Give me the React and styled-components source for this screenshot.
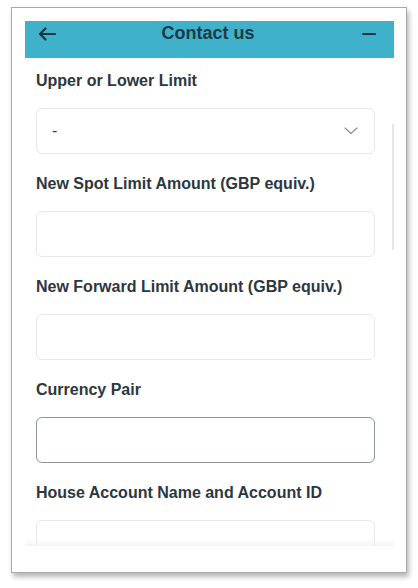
import styled, { createGlobalStyle } from "styled-components";

const GlobalStyle = createGlobalStyle`
  html, body {
    margin: 0;
    padding: 0;
    background: #ffffff;
    font-family: "Liberation Sans", Arial, sans-serif;
  }
`;

const fields = [
  { label: "Upper or Lower Limit", select: true },
  { label: "New Spot Limit Amount (GBP equiv.)" },
  { label: "New Forward Limit Amount (GBP equiv.)" },
  { label: "Currency Pair", active: true },
  { label: "House Account Name and Account ID" },
];

export default function App() {
  return (
    <>
      <GlobalStyle />
      <Page>
        <Frame>
          <Header>
            <IconButton aria-label="back">
              <svg width="18" height="14" viewBox="0 0 18 14" fill="none">
                <path d="M17 7H2M7.5 1.5L2 7l5.5 5.5" stroke="#1d3640" strokeWidth="2.2" strokeLinecap="round" strokeLinejoin="round" />
              </svg>
            </IconButton>
            <Title>Contact us</Title>
            <IconButton aria-label="minimise">
              <svg width="14" height="14" viewBox="0 0 14 14" fill="none">
                <path d="M1 7h12" stroke="#1d3640" strokeWidth="2" strokeLinecap="round" />
              </svg>
            </IconButton>
          </Header>
          <Body>
            <Form>
              {fields.map((f) => (
                <Field key={f.label}>
                  <Label>{f.label}</Label>
                  {f.select ? (
                    <SelectBox>
                      <span>-</span>
                      <svg width="14" height="8" viewBox="0 0 14 8" fill="none">
                        <path d="M1 1l6 5.5L13 1" stroke="#8b9096" strokeWidth="1.2" strokeLinecap="round" strokeLinejoin="round" />
                      </svg>
                    </SelectBox>
                  ) : (
                    <Input $active={f.active} />
                  )}
                </Field>
              ))}
            </Form>
            <ScrollThumb />
            <Fade />
          </Body>
        </Frame>
      </Page>
    </>
  );
}

const Page = styled.div`
  width: 418px;
  height: 588px;
  padding: 7px 0 0 11px;
  box-sizing: border-box;
`;

const Frame = styled.div`
  width: 396px;
  height: 566px;
  box-sizing: border-box;
  border: 1px solid #a9a9a9;
  background: #ffffff;
  box-shadow: 2px 4px 5px rgba(0, 0, 0, 0.28);
  padding: 13px 12px 0 13px;
`;

const Header = styled.div`
  height: 37px;
  background: #40b1cb;
  display: flex;
  align-items: flex-start;
  justify-content: space-between;
  padding: 1px 16px 0 13px;
  box-sizing: border-box;
`;

const IconButton = styled.div`
  width: 18px;
  height: 18px;
  display: flex;
  align-items: center;
  justify-content: center;
  margin-top: 3px;
`;

const Title = styled.div`
  font-size: 18px;
  font-weight: 700;
  color: #1e3b45;
  line-height: 22px;
`;

const Body = styled.div`
  position: relative;
  height: 488px;
  overflow: hidden;
`;

const Form = styled.div`
  display: flex;
  flex-direction: column;
  gap: 20px;
  padding: 13px 19px 0 11px;
`;

const Field = styled.div`
  display: flex;
  flex-direction: column;
  gap: 17px;
`;

const Label = styled.div`
  font-size: 16px;
  font-weight: 700;
  line-height: 20px;
  color: #2c3740;
`;

const SelectBox = styled.div`
  height: 46px;
  box-sizing: border-box;
  border: 1px solid #e6e8eb;
  border-radius: 6px;
  display: flex;
  align-items: center;
  justify-content: space-between;
  padding: 0 16px 0 15px;
  font-size: 16px;
  color: #3a4148;
`;

const Input = styled.div`
  height: 46px;
  box-sizing: border-box;
  border: 1px solid ${(p) => (p.$active ? "#8e959c" : "#e6e8eb")};
  border-radius: 6px;
`;

const ScrollThumb = styled.div`
  position: absolute;
  right: 0;
  top: 66px;
  width: 2px;
  height: 126px;
  background: #e4e6e8;
  border-radius: 1px;
`;

const Fade = styled.div`
  position: absolute;
  left: 0;
  right: 0;
  bottom: 0;
  height: 8px;
  background: linear-gradient(to bottom, rgba(255, 255, 255, 0), rgba(238, 238, 238, 0.6));
`;
